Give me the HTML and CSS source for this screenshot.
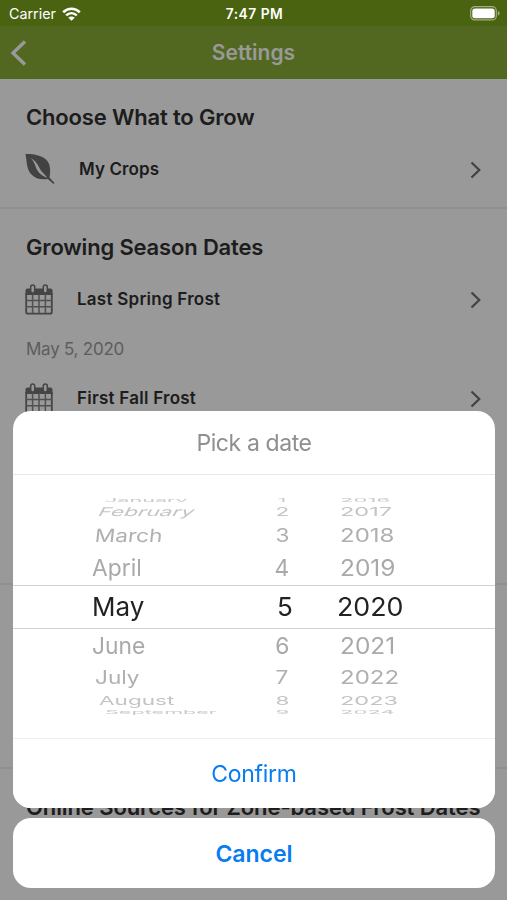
FILE: index.html
```html
<!DOCTYPE html>
<html lang="en">
<head>
  <meta charset="UTF-8">
  <title>Settings</title>
  <link rel="stylesheet" href="styles.css">
</head>
<body>

  <!-- Status bar -->
  <div class="status-bar">
    <div class="carrier">
      <span>Carrier</span>
      <svg class="wifi" width="19" height="14" viewBox="0 0 19 14" fill="none" stroke="#fff" stroke-width="2.6">
        <path d="M1.200 5.200C6 .6 13 .6 17.800 5.200"/>
        <path d="M4.200 8.400C7.300 5.500 11.700 5.500 14.800 8.400"/>
        <path d="M9.500 13.800L6.300 10.700C8.100 9.100 10.900 9.100 12.700 10.700Z" fill="#fff" stroke="none"/>
      </svg>
    </div>
    <div class="time">7:47 PM</div>
    <svg class="battery" width="30" height="15" viewBox="0 0 30 15">
      <rect x=".7" y=".7" width="25.6" height="13.2" rx="4" fill="none" stroke="#a2ae85" stroke-width="1.2"/>
      <rect x="2.3" y="2.4" width="22.4" height="9.8" rx="2.5" fill="#fff"/>
      <path d="M27.8 5v4.600c1.200-.4 1.800-1.300 1.800-2.300s-.6-1.900-1.800-2.300z" fill="#a2ae85"/>
    </svg>
  </div>

  <div class="navbar">
    <svg class="back" width="18" height="28" viewBox="0 0 18 28" fill="none" stroke="#fff" stroke-width="3.4">
      <path d="M15 2.500L3 14l12 11.500"/>
    </svg>
    <h1>Settings</h1>
  </div>

  <section class="section">
    <h2 class="choose">Choose What to Grow</h2>
    <div class="item crops">
      <svg class="icon" width="30" height="32" viewBox="0 0 30 32">
        <path d="M.5 1C9 .8 17 2.500 21.500 7C25.500 11 25.800 18 24.500 24.500L29.500 30L28.500 31L22.800 26C16 27.200 9.500 25.500 5.500 20.500C1.500 15.300 1.800 8 .5 1Z" fill="#6f6f6f"/>
        <path d="M5.500 5C11.500 8 12.800 12 15 16C17 19.500 19.500 20.500 22.200 25C18 22.800 15 21.500 12.500 17.500C10 13.500 10 9 5.500 5Z" fill="#fff"/>
      </svg>
      <span class="name">My Crops</span>
      <svg class="chevron" width="11" height="18" viewBox="0 0 11 18"><path d="M1.500 1.500L9.300 9L1.500 16.500"/></svg>
    </div>
  </section>

  <section class="section dates">
    <h2 class="growing">Growing Season Dates</h2>
    <div class="item">
      <svg class="icon" width="28" height="31" viewBox="0 0 28 31">
        <g id="calendar">
          <path d="M2.500 4.500H25.500Q27.500 4.500 27.500 6.500V11H.5V6.500Q.5 4.500 2.500 4.500Z" fill="#737373"/>
          <path d="M1.200 9V28Q1.200 29.700 3 29.700H25Q26.800 29.700 26.800 28V9" fill="none" stroke="#737373" stroke-width="1.800"/>
          <path d="M1 16.500H27M1 22.800H27M7.600 10V29M14 10V29M20.400 10V29" fill="none" stroke="#858585" stroke-width="1.500"/>
          <rect x="5.700" y="1" width="4" height="8" rx="2" fill="#fff" stroke="#737373" stroke-width="1.500"/>
          <rect x="18.300" y="1" width="4" height="8" rx="2" fill="#fff" stroke="#737373" stroke-width="1.500"/>
        </g>
      </svg>
      <span class="name">Last Spring Frost</span>
      <svg class="chevron" width="11" height="18" viewBox="0 0 11 18"><path d="M1.500 1.500L9.300 9L1.500 16.500"/></svg>
    </div>
    <p class="date">May 5, 2020</p>
    <div class="item">
      <svg class="icon" width="28" height="31" viewBox="0 0 28 31"><use href="#calendar"/></svg>
      <span class="name">First Fall Frost</span>
      <svg class="chevron" width="11" height="18" viewBox="0 0 11 18"><path d="M1.500 1.500L9.300 9L1.500 16.500"/></svg>
    </div>
  </section>

  <section class="section spacer"></section>

  <section class="section sources">
    <h2>Online Sources for Zone-based Frost Dates</h2>
  </section>

  <!-- Date picker sheet -->
  <div class="overlay">
    <div class="sheet">
      <div class="sheet-title">Pick a date</div>
      <div class="wheel">
        <div class="row edge top"><span class="month">January</span><span class="day">1</span><span class="year">2016</span></div>
        <div class="row far top2"><span class="month">February</span><span class="day">2</span><span class="year">2017</span></div>
        <div class="row mid top3"><span class="month">March</span><span class="day">3</span><span class="year">2018</span></div>
        <div class="row near top4"><span class="month">April</span><span class="day">4</span><span class="year">2019</span></div>
        <div class="row selected"><span class="month">May</span><span class="day">5</span><span class="year">2020</span></div>
        <div class="row near bottom4"><span class="month">June</span><span class="day">6</span><span class="year">2021</span></div>
        <div class="row mid bottom3"><span class="month">July</span><span class="day">7</span><span class="year">2022</span></div>
        <div class="row far bottom2"><span class="month">August</span><span class="day">8</span><span class="year">2023</span></div>
        <div class="row edge bottom"><span class="month">September</span><span class="day">9</span><span class="year">2024</span></div>
      </div>
      <button class="confirm">Confirm</button>
    </div>
    <button class="cancel">Cancel</button>
  </div>

</body>
</html>
```

FILE: styles.css
```css
* {
  box-sizing: border-box;
}

body {
  margin: 0;
  height: 900px;
  overflow: hidden;
  background: #fff;
  color: #313131;
  font-family: Inter, "Liberation Sans", sans-serif;
}

h1, h2, p {
  margin: 0;
}

.status-bar {
  position: relative;
  z-index: 2;
  display: grid;
  grid-template-columns: 1fr auto 1fr;
  align-items: center;
  height: 26px;
  padding: 1px 7px 0 9px;
  background: #4a6311;
  color: #fff;
  font-size: 14.3px;
}

.carrier {
  display: flex;
  align-items: center;
  gap: 6px;
}

.time {
  font-weight: 600;
  font-size: 13.8px;
  letter-spacing: 0.5px;
}

.battery {
  justify-self: end;
}

.navbar {
  display: grid;
  grid-template-columns: 18px 1fr 18px;
  align-items: center;
  height: 53px;
  padding: 0 10px;
  background: #89ac34;
  color: #fff;
}

.navbar h1 {
  text-align: center;
  font-size: 21px;
  font-weight: 600;
}

.section {
  height: 130px;
  padding: 25px 26px 0;
  border-bottom: 2px solid #f1f1f1;
}

.section h2 {
  font-size: 22px;
  line-height: 26px;
  font-weight: 600;
  letter-spacing: -0.1px;
  white-space: nowrap;
}

.section .choose,
.section .growing {
  letter-spacing: -0.17px;
}

.dates {
  height: 376px;
}

.spacer {
  height: 184px;
}

.sources {
  border-bottom: none;
}

.item {
  display: flex;
  align-items: center;
  height: 40px;
  margin-top: 19px;
}

.icon {
  margin-left: -1px;
}

.name {
  flex: 1;
  margin-left: 24px;
  font-size: 17px;
  font-weight: 600;
  letter-spacing: 0.25px;
}

.crops .name {
  letter-spacing: 0.1px;
}

.chevron {
  margin-top: 2px;
  fill: none;
  stroke: #6f6f6f;
  stroke-width: 2.2;
}

.date {
  margin-top: 17px;
  color: #9c9c9c;
  font-size: 17px;
  line-height: 26px;
  letter-spacing: -0.25px;
}

.date + .item {
  margin-top: 16px;
}

.overlay {
  position: fixed;
  inset: 0;
  z-index: 1;
  display: flex;
  flex-direction: column;
  justify-content: flex-end;
  gap: 10px;
  padding: 0 12px 12px 13px;
  background: rgba(0, 0, 0, 0.4);
}

.sheet {
  overflow: hidden;
  border-radius: 18px;
  background: #fff;
}

.sheet-title {
  height: 64px;
  border-bottom: 1px solid #e8e8e8;
  color: #8f8f8f;
  font-size: 23px;
  line-height: 65px;
  letter-spacing: -0.4px;
  text-align: center;
}

button {
  display: block;
  width: 100%;
  height: 70px;
  padding: 1px 0 0;
  border: none;
  background: #fff;
  color: #087cf0;
  font-family: inherit;
  font-size: 23px;
}

.confirm {
  border-top: 1px solid #efefef;
  letter-spacing: -0.3px;
}

.cancel {
  border-radius: 18px;
  font-weight: 600;
}

/* Wheel rows get flatter away from the selected one */
.wheel {
  height: 263px;
  padding-top: 22px;
}

.row {
  display: grid;
  grid-template-columns: 172px 26px 1fr;
  grid-template-rows: 100%;
  align-items: center;
  padding-left: 79px;
  overflow: hidden;
  color: #a9a9a9;
  font-size: 24px;
  line-height: 30px;
}

.row span {
  justify-self: start;
}

.row .month {
  transform: translateX(var(--shift, 0)) scale(var(--sx), var(--sy)) skewX(var(--skew, 0deg));
  transform-origin: left center;
}

.row .day {
  justify-self: center;
  transform: translateX(5px) scale(var(--sx), var(--sy));
}

.row .year {
  margin-left: 50px;
  transform: scale(var(--year, var(--sx)), var(--sy));
  transform-origin: left center;
}

.near {
  --sx: 0.95;
  --sy: 0.96;
  --year: 1.02;
}

.mid {
  --sx: 0.94;
  --sy: 0.76;
  --shift: 3px;
  --year: 1;
  color: #b0b0b0;
}

.far {
  --sx: 0.94;
  --sy: 0.5;
  --shift: 7px;
  --year: 0.98;
  color: #c4c4c4;
}

.edge {
  --sx: 0.9;
  --sy: 0.22;
  --shift: 13px;
  --year: 0.92;
  color: #cacaca;
}

.selected {
  --sx: 1;
  --sy: 1;
  --year: 1.03;
  height: 44px;
  border-top: 1px solid #d2d2d2;
  border-bottom: 1px solid #d2d2d2;
  color: #222;
  font-size: 26px;
}

.selected .day {
  transform: translateX(8px);
}

.selected .year {
  margin-left: 47px;
}

.top {
  height: 5px;
}

.top2 {
  --skew: -16deg;
  height: 19px;
}

.top3 {
  --skew: -5deg;
  height: 29px;
}

.top4 {
  height: 35px;
  padding-top: 1px;
}

.bottom4 {
  height: 33px;
}

.bottom3 {
  height: 31px;
}

.bottom2 {
  height: 16px;
}

.bottom {
  height: 6px;
}
```
